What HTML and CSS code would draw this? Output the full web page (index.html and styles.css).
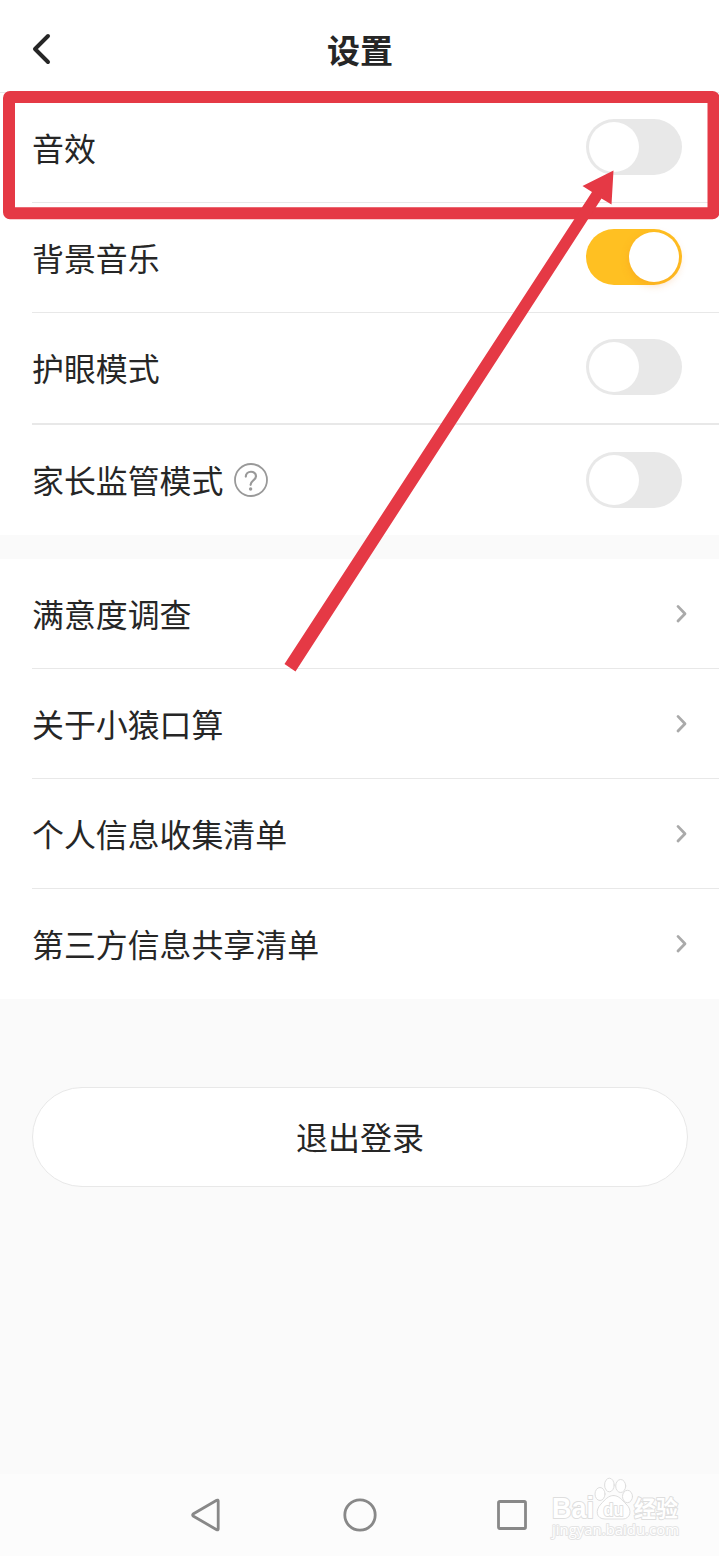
FILE: index.html
```html
<!DOCTYPE html>
<html lang="zh-CN">
<head>
  <meta charset="UTF-8">
  <meta name="viewport" content="width=device-width, initial-scale=1.0">
  <title>设置</title>
  <link rel="stylesheet" href="styles.css">
</head>
<body>
  <header class="header">
    <svg class="back" width="24" height="36" viewBox="0 0 24 36">
      <path d="M18 5 L5 18 L18 31" />
    </svg>
    <h1>设置</h1>
  </header>

  <main class="content">
    <section class="group switches">
      <div class="row">
        <span class="label">音效</span>
        <span class="toggle"></span>
      </div>
      <div class="row">
        <span class="label">背景音乐</span>
        <span class="toggle on"></span>
      </div>
      <div class="row thick">
        <span class="label">护眼模式</span>
        <span class="toggle"></span>
      </div>
      <div class="row last">
        <span class="label">家长监管模式</span>
        <svg class="help" width="34" height="34" viewBox="0 0 34 34">
          <circle cx="17" cy="17" r="16" />
          <path class="mark" d="M11.8 13.6 C11.8 7.2 22 7.2 22 13.2 C22 17.2 16.6 17.4 16.6 21.8" />
          <circle class="dot" cx="16.6" cy="26" r="1.7" />
        </svg>
        <span class="toggle"></span>
      </div>
    </section>

    <section class="group links">
      <div class="row">
        <span class="label">满意度调查</span>
        <svg class="arrow" width="12" height="20" viewBox="0 0 12 20"><path d="M3 2.4 L10 9.7 L3 17" /></svg>
      </div>
      <div class="row">
        <span class="label">关于小猿口算</span>
        <svg class="arrow" width="12" height="20" viewBox="0 0 12 20"><path d="M3 2.4 L10 9.7 L3 17" /></svg>
      </div>
      <div class="row">
        <span class="label">个人信息收集清单</span>
        <svg class="arrow" width="12" height="20" viewBox="0 0 12 20"><path d="M3 2.4 L10 9.7 L3 17" /></svg>
      </div>
      <div class="row last">
        <span class="label">第三方信息共享清单</span>
        <svg class="arrow" width="12" height="20" viewBox="0 0 12 20"><path d="M3 2.4 L10 9.7 L3 17" /></svg>
      </div>
    </section>

    <button class="logout">退出登录</button>
  </main>

  <nav class="navbar">
    <svg width="34" height="36" viewBox="0 0 34 36"><path d="M27.2 4 L27.2 32 Q27 33.4 25.7 32.7 L2.5 19.3 Q0.7 18 2.5 16.7 L25.7 3.3 Q27 2.6 27.2 4 Z" /></svg>
    <svg width="34" height="36" viewBox="0 0 34 36"><circle cx="17" cy="18" r="15.2" /></svg>
    <svg width="34" height="36" viewBox="0 0 34 36"><rect x="3.5" y="4.5" width="27" height="27" rx="1.2" /></svg>
  </nav>

  <!-- watermark -->
  <svg class="watermark" width="140" height="70" viewBox="0 0 140 70">
    <text class="brand" x="6" y="42.5" textLength="42" lengthAdjust="spacingAndGlyphs">Bai</text>
    <ellipse cx="54" cy="19" rx="5" ry="6.5" />
    <ellipse cx="63.4" cy="10" rx="4.8" ry="6.8" />
    <ellipse cx="74.7" cy="11" rx="5" ry="6.5" />
    <ellipse cx="81.5" cy="21.5" rx="5" ry="6.2" />
    <path d="M67.5 20.5 C73 20.5 76 25 80 29 C87 35 84 44 77 44 L59 44 C50 44 49 35 55 29 C59 25 62 20.5 67.5 20.5 Z" />
    <text class="du" x="57.5" y="40.5" textLength="20" lengthAdjust="spacingAndGlyphs">du</text>
    <text class="cn" x="88" y="41.5" textLength="44" lengthAdjust="spacingAndGlyphs">经验</text>
    <text class="site" x="6" y="60" textLength="127" lengthAdjust="spacingAndGlyphs">jingyan.baidu.com</text>
  </svg>

  <!-- highlight frame and pointer over the first switch -->
  <svg class="marker" width="719" height="700" viewBox="0 0 719 700">
    <rect x="9" y="97" width="704.5" height="116.3" rx="1" />
    <polygon points="284.5,664 592,192 582.5,186 613.5,170.5 611.5,204.5 601.5,198.5 295.5,671.5" />
  </svg>
</body>
</html>
```

FILE: styles.css
```css
* {
  margin: 0;
  padding: 0;
  box-sizing: border-box;
}

body {
  position: relative;
  display: flex;
  flex-direction: column;
  height: 1556px;
  font-family: "Noto Sans CJK SC", sans-serif;
  background-color: #fafafa;
  color: #262626;
  overflow: hidden;
}

svg {
  display: block;
  fill: none;
  stroke-linecap: round;
  stroke-linejoin: round;
}

.header {
  display: grid;
  grid-template-columns: 61px 1fr 60px;
  align-items: center;
  height: 93px;
  padding: 6px 0 0;
  background-color: #fff;
  border-bottom: 1px solid #e8e8e8;
}

.header h1 {
  font-size: 33px;
  font-weight: 700;
  line-height: 48px;
  text-align: center;
}

.back {
  margin-left: 30px;
  stroke: #262626;
  stroke-width: 4;
}

.content {
  flex: 1;
}

.group {
  background-color: #fff;
  padding-left: 32px;
}

.links {
  margin-top: 24px;
}

.row {
  display: flex;
  align-items: center;
  height: 110px;
  padding: 0 37px 1px 0;
  border-bottom: 1px solid #e8e8e8;
}

.row.thick {
  height: 112px;
  padding-bottom: 2px;
  border-bottom-width: 2px;
}

.row.last {
  padding-bottom: 0;
  border-bottom: none;
}

.links .row {
  padding-right: 32px;
}

.label {
  font-size: 31.9px;
  line-height: 48px;
}

.last .label {
  padding-bottom: 2px;
}

.help {
  margin-left: 11px;
  stroke: #999;
  stroke-width: 1.8;
}

.help .mark {
  stroke-width: 2.2;
}

.help .dot {
  fill: #999;
  stroke: none;
}

.toggle {
  width: 96px;
  height: 56px;
  margin-left: auto;
  padding: 3px;
  border-radius: 28px;
  background-color: #e8e8e8;
}

.toggle::after {
  content: "";
  display: block;
  width: 50px;
  height: 50px;
  border-radius: 50%;
  background-color: #fff;
}

.toggle.on {
  background-color: #ffc022;
}

.toggle.on::after {
  margin-left: auto;
  box-shadow: 0 3px 8px rgba(240, 130, 30, 0.3);
}

.arrow {
  margin-top: 2px;
  margin-left: auto;
  stroke: #aaa;
  stroke-width: 2.8;
}

.last .arrow {
  margin-top: 0;
}

.logout {
  display: block;
  width: 656px;
  height: 100px;
  margin: 88px auto 0 32px;
  padding-bottom: 2px;
  border: 1px solid #e8e8e8;
  border-radius: 50px;
  background-color: #fff;
  color: #262626;
  font-family: inherit;
  font-size: 32px;
}

.navbar {
  display: flex;
  justify-content: center;
  gap: 118px;
  height: 82px;
  padding: 23px 0 0 1px;
  background-color: #fcfcfc;
}

.navbar svg {
  stroke: #888;
  stroke-width: 2.8;
}

.watermark {
  position: absolute;
  left: 546px;
  top: 1475px;
  fill: #fff;
  stroke: #dedede;
  stroke-width: 1;
}

.watermark text {
  font-family: "Liberation Sans", sans-serif;
  font-weight: 700;
  paint-order: stroke;
  stroke-width: 2;
}

.watermark .brand {
  font-size: 29px;
}

.watermark .du {
  font-size: 19px;
}

.watermark .cn {
  font-family: "Noto Sans CJK SC", sans-serif;
  font-size: 23px;
}

.watermark .site {
  font-family: "Open Sans", sans-serif;
  font-size: 15px;
  font-weight: 400;
  stroke: #e4e4e4;
}

.marker {
  position: absolute;
  left: 0;
  top: 0;
}

.marker rect {
  stroke: #e53945;
  stroke-width: 12;
}

.marker polygon {
  fill: #e53945;
}
```
